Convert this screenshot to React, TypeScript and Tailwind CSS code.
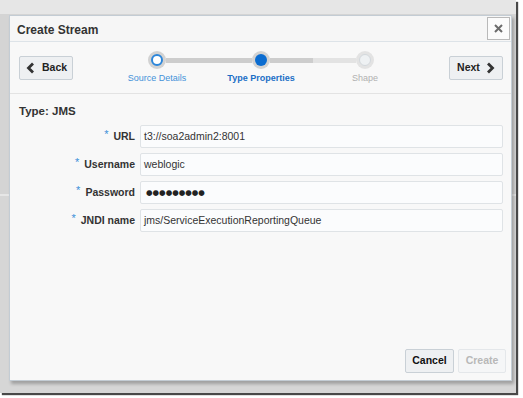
import { ReactNode } from "react";

const font = { fontFamily: '"Liberation Sans", Arial, sans-serif' };

const ChevronLeft = () => (
  <svg width="9" height="12" viewBox="0 0 9 12">
    <polyline points="7,1.5 2.5,6 7,10.5" fill="none" stroke="#333" strokeWidth="2.8" />
  </svg>
);

const ChevronRight = () => (
  <svg width="9" height="12" viewBox="0 0 9 12">
    <polyline points="2,1.5 6.5,6 2,10.5" fill="none" stroke="#333" strokeWidth="2.8" />
  </svg>
);

interface StepProps {
  label: string;
  state: "done" | "current" | "todo";
  left?: string;
  right?: string;
}

const Step = ({ label, state, left, right }: StepProps) => {
  const labelClass =
    state === "current"
      ? "text-[#1b6fc6] font-bold"
      : state === "done"
        ? "text-[#4592d8]"
        : "text-[#b0b0b0]";
  return (
    <div className="flex w-[104px] flex-col items-center">
      <div className="flex h-[19px] w-full items-center">
        <div className={`h-[5px] flex-1 ${left ?? ""}`} />
        <div
          className={`flex h-[18px] w-[18px] items-center justify-center rounded-full ${
            state === "todo" ? "bg-[#e3e3e3]" : "bg-[#d2d2d2]"
          }`}
        >
          {state === "done" && (
            <div className="h-[12px] w-[12px] rounded-full border-2 border-[#2c86da] bg-white" />
          )}
          {state === "current" && <div className="h-[12px] w-[12px] rounded-full bg-[#0b6cd0]" />}
          {state === "todo" && (
            <div className="h-[12px] w-[12px] rounded-full border border-[#d3d8dc] bg-[#eef1f3]" />
          )}
        </div>
        <div className={`h-[5px] flex-1 ${right ?? ""}`} />
      </div>
      <div className={`mt-[2px] text-[9px] leading-[12px] ${labelClass}`}>{label}</div>
    </div>
  );
};

const Field = ({ label, children }: { label: string; children: ReactNode }) => (
  <div className="flex items-center">
    <div className="flex w-[125px] items-center justify-end">
      <span className="mr-[5px] -mt-[4px] text-[11px] leading-none text-[#3a8fd9]">*</span>
      <span className="text-[10.5px] font-bold text-[#333]">{label}</span>
    </div>
    <div className="ml-[5px] flex h-[23px] w-[363px] items-center rounded-[2px] border border-[#dfe3e6] bg-[#fbfcfd] pl-[3px] text-[10.5px] text-[#333]">
      {children}
    </div>
  </div>
);

export default function App() {
  return (
    <div className="h-[398px] w-[523px] bg-white" style={font}>
      <div className="h-[393px] w-[516px] bg-[linear-gradient(to_bottom,#e6e6e6_0,#e6e6e6_14px,#d4d4d4_14px,#d4d4d4_194px,#e6e6e6_194px,#e6e6e6_196px,#d6d6d6_196px)] pl-[9px] pt-[15px] shadow-[2px_2px_1px_rgba(40,40,40,0.85)]">
        <div className="flex h-[366px] w-[503px] flex-col border border-[#c3ccd4] bg-[#f8f8f8] shadow-[2px_3px_3px_rgba(0,0,0,0.25)]">
          {/* Header */}
          <div className="flex h-[26px] items-start justify-between border-b border-[#dde3e8] bg-[#f6f6f6]">
            <div className="pl-[7px] pt-[5px] text-[12px] font-bold text-[#333]">Create Stream</div>
            <div className="mr-[1px] mt-[1px] flex h-[23px] w-[23px] items-center justify-center border border-[#b9b9b9] bg-[#fbfbfb]">
              <svg width="9" height="9" viewBox="0 0 9 9">
                <path d="M1 1 L8 8 M8 1 L1 8" stroke="#6b6b6b" strokeWidth="2" />
              </svg>
            </div>
          </div>

          {/* Train */}
          <div className="flex h-[52px] items-center justify-between border-b border-[#e3e3e3] pl-[9px] pr-[8px]">
            <button className="flex h-[24px] w-[54px] items-center gap-[7px] rounded-[2px] border border-[#c9d0d6] bg-[#eef0f2] pl-[6px] text-[10.5px] font-bold text-[#222]">
              <ChevronLeft />
              Back
            </button>
            <div className="-mt-[1px] flex">
              <Step label="Source Details" state="done" right="bg-[#cdcdcd]" />
              <Step label="Type Properties" state="current" left="bg-[#cdcdcd]" right="bg-[linear-gradient(to_right,#cdcdcd_0,#cdcdcd_43px,#e3e3e3_43px)]" />
              <Step label="Shape" state="todo" left="bg-[#e3e3e3]" />
            </div>
            <button className="flex h-[24px] w-[54px] items-center justify-center gap-[6px] rounded-[2px] border border-[#c9d0d6] bg-[#eef0f2] text-[10.5px] font-bold text-[#222]">
              Next
              <ChevronRight />
            </button>
          </div>

          {/* Form */}
          <div className="pl-[9px] pt-[10px] text-[11.5px] font-bold leading-[14px] text-[#333]">Type: JMS</div>
          <div className="mt-[7px] flex flex-col gap-[5px]">
            <Field label="URL">t3://soa2admin2:8001</Field>
            <Field label="Username">weblogic</Field>
            <Field label="Password">
              <span className="pl-[2px] text-[7.5px] tracking-[0px] text-[#222]" style={{ fontFamily: '"DejaVu Sans", sans-serif' }}>
                ●●●●●●●●●
              </span>
            </Field>
            <Field label="JNDI name">jms/ServiceExecutionReportingQueue</Field>
          </div>

          {/* Footer */}
          <div className="mt-auto flex justify-end gap-[4px] pb-[7px] pr-[5px]">
            <button className="h-[24px] w-[49px] rounded-[2px] border border-[#c9d0d6] bg-[#eef0f2] text-[10.5px] font-bold text-[#111]">
              Cancel
            </button>
            <button className="h-[24px] w-[48px] rounded-[2px] border border-[#e4e7ea] bg-[#f5f6f7] text-[10.5px] font-bold text-[#b8b8b8]">
              Create
            </button>
          </div>
        </div>
      </div>
    </div>
  );
}
